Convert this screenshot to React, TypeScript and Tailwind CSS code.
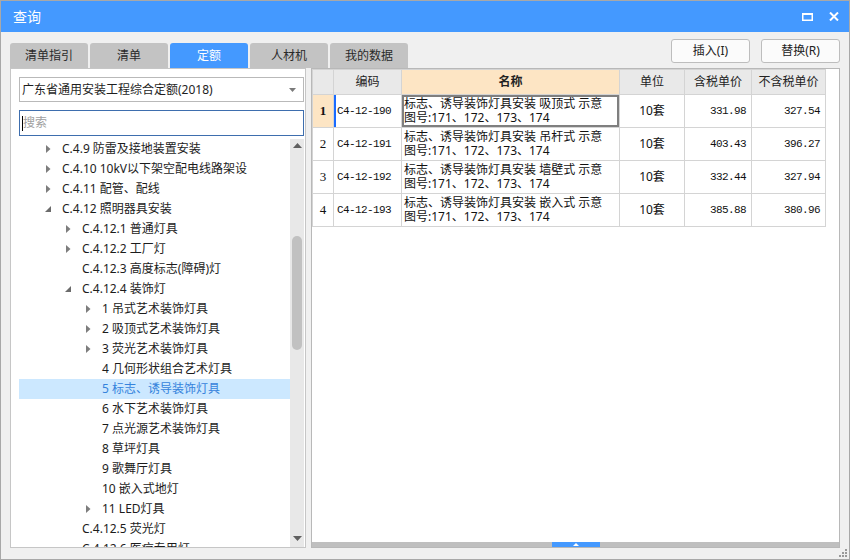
import React from 'react';

type Arrow = 'none' | 'closed' | 'open';

interface TreeItem {
  label: string;
  depth: 0 | 1 | 2;
  arrow: Arrow;
  selected?: boolean;
}

interface QuotaRow {
  no: number;
  code: string;
  name: string;
  unit: string;
  price: string;
  priceNoTax: string;
}

const tabs = ['清单指引', '清单', '定额', '人材机', '我的数据'];

const treeItems: TreeItem[] = [
  { label: 'C.4.9 防雷及接地装置安装', depth: 0, arrow: 'closed' },
  { label: 'C.4.10 10kV以下架空配电线路架设', depth: 0, arrow: 'closed' },
  { label: 'C.4.11 配管、配线', depth: 0, arrow: 'closed' },
  { label: 'C.4.12 照明器具安装', depth: 0, arrow: 'open' },
  { label: 'C.4.12.1 普通灯具', depth: 1, arrow: 'closed' },
  { label: 'C.4.12.2 工厂灯', depth: 1, arrow: 'closed' },
  { label: 'C.4.12.3 高度标志(障碍)灯', depth: 1, arrow: 'none' },
  { label: 'C.4.12.4 装饰灯', depth: 1, arrow: 'open' },
  { label: '1 吊式艺术装饰灯具', depth: 2, arrow: 'closed' },
  { label: '2 吸顶式艺术装饰灯具', depth: 2, arrow: 'closed' },
  { label: '3 荧光艺术装饰灯具', depth: 2, arrow: 'closed' },
  { label: '4 几何形状组合艺术灯具', depth: 2, arrow: 'none' },
  { label: '5 标志、诱导装饰灯具', depth: 2, arrow: 'none', selected: true },
  { label: '6 水下艺术装饰灯具', depth: 2, arrow: 'none' },
  { label: '7 点光源艺术装饰灯具', depth: 2, arrow: 'none' },
  { label: '8 草坪灯具', depth: 2, arrow: 'none' },
  { label: '9 歌舞厅灯具', depth: 2, arrow: 'none' },
  { label: '10 嵌入式地灯', depth: 2, arrow: 'none' },
  { label: '11 LED灯具', depth: 2, arrow: 'closed' },
  { label: 'C.4.12.5 荧光灯', depth: 1, arrow: 'none' },
  { label: 'C.4.12.6 医疗专用灯', depth: 1, arrow: 'none' },
];

const rows: QuotaRow[] = [
  { no: 1, code: 'C4-12-190', name: '吸顶式', unit: '10套', price: '331.98', priceNoTax: '327.54' },
  { no: 2, code: 'C4-12-191', name: '吊杆式', unit: '10套', price: '403.43', priceNoTax: '396.27' },
  { no: 3, code: 'C4-12-192', name: '墙壁式', unit: '10套', price: '332.44', priceNoTax: '327.94' },
  { no: 4, code: 'C4-12-193', name: '嵌入式', unit: '10套', price: '385.88', priceNoTax: '380.96' },
];

const depthPad = ['pl-[24px]', 'pl-[44px]', 'pl-[64px]'];

const TreeArrow: React.FC<{ arrow: Arrow }> = ({ arrow }) => {
  if (arrow === 'closed') {
    return (
      <svg width="5" height="8" viewBox="0 0 5 8">
        <path d="M0 0L4.5 4L0 8Z" fill="#7d7d7d" />
      </svg>
    );
  }
  if (arrow === 'open') {
    return (
      <svg width="6" height="6" viewBox="0 0 6 6">
        <path d="M6 0L6 6L0 6Z" fill="#6b6b6b" />
      </svg>
    );
  }
  return null;
};

const TitleBar: React.FC = () => (
  <div className="h-[31px] shrink-0 bg-[#4499ff] flex items-center pl-[12px] pr-[10px] text-white text-[14px]">
    <span>查询</span>
    <div className="ml-auto flex items-center gap-[16px]">
      <svg width="11" height="8" viewBox="0 0 11 8">
        <rect x="0.75" y="1" width="9.5" height="6.25" fill="none" stroke="#fff" strokeWidth="1.5" />
        <rect x="0" y="0" width="11" height="2" fill="#fff" />
      </svg>
      <svg width="10" height="9" viewBox="0 0 10 9">
        <path d="M1 0.5L9 8.5M9 0.5L1 8.5" stroke="#fff" strokeWidth="2" />
      </svg>
    </div>
  </div>
);

const TreeScrollbar: React.FC = () => (
  <div className="w-[14px] shrink-0 bg-[#e8e8e8] flex flex-col items-center">
    <div className="h-[9px] shrink-0 flex items-end">
      <svg width="9" height="5" viewBox="0 0 9 5">
        <path d="M0 5L4.5 0L9 5Z" fill="#606060" />
      </svg>
    </div>
    <div className="h-[88px] shrink-0" />
    <div className="w-[10px] h-[114px] shrink-0 rounded-[5px] bg-[#c1c1c1]" />
    <div className="flex-1" />
    <div className="h-[11px] shrink-0 flex items-start">
      <svg width="9" height="5" viewBox="0 0 9 5">
        <path d="M0 0L9 0L4.5 5Z" fill="#606060" />
      </svg>
    </div>
  </div>
);

const LeftPanel: React.FC = () => (
  <div className="w-[296px] shrink-0 bg-white border border-[#c6c6c6] pt-[8px] pl-[8px] pr-[1px] flex flex-col overflow-hidden">
    <div className="h-[25px] shrink-0 border border-[#b9b9b9] flex items-center pl-[2px] pr-[7px] text-[12px] text-[#1e1e1e]">
      <span>广东省通用安装工程综合定额(2018)</span>
      <svg className="ml-auto" width="7" height="4" viewBox="0 0 7 4">
        <path d="M0 0L7 0L3.5 4Z" fill="#7a7a7a" />
      </svg>
    </div>
    <div className="mt-[8px] h-[26px] shrink-0 border border-[#3e6eae] flex items-center pl-[2px] text-[12px] text-[#a0a0a0]">
      <span className="w-px h-[15px] bg-black" />
      <span>搜索</span>
    </div>
    <div className="mt-[3px] flex-1 flex min-h-0">
      <div className="flex-1 overflow-hidden">
        {treeItems.map((item) => (
          <div
            key={item.label}
            className={`h-[20px] flex items-center ${depthPad[item.depth]} ${item.selected ? 'bg-[#cce8ff] text-[#3583dc]' : 'text-[#1c1c1c]'}`}
          >
            <span className="w-[10px] h-[20px] flex items-center justify-center">
              <TreeArrow arrow={item.arrow} />
            </span>
            <span className="ml-[9px] text-[12px] whitespace-nowrap">{item.label}</span>
          </div>
        ))}
      </div>
      <TreeScrollbar />
    </div>
  </div>
);

const mono = "font-['Liberation_Mono','Noto_Sans_CJK_SC',monospace] text-[11px] tracking-[-0.6px]";
const cell = 'border border-[#d4d4d4]';

const QuotaTable: React.FC = () => (
  <table className="border-collapse table-fixed w-[513px] -ml-px -mt-px">
    <colgroup>
      <col className="w-[21px]" />
      <col className="w-[68px]" />
      <col className="w-[218px]" />
      <col className="w-[65px]" />
      <col className="w-[67px]" />
      <col className="w-[74px]" />
    </colgroup>
    <thead>
      <tr className="h-[25px] text-[12px] text-[#222]">
        <th className={`${cell} bg-[#e9e9e9]`} />
        <th className={`${cell} bg-[#e9e9e9] font-normal`}>编码</th>
        <th className={`${cell} bg-[#fde5c4] font-bold`}>名称</th>
        <th className={`${cell} bg-[#e9e9e9] font-normal`}>单位</th>
        <th className={`${cell} bg-[#e9e9e9] font-normal`}>含税单价</th>
        <th className={`${cell} bg-[#e9e9e9] font-normal`}>不含税单价</th>
      </tr>
    </thead>
    <tbody>
      {rows.map((row) => {
        const active = row.no === 1;
        return (
          <tr key={row.code} className="h-[33px] text-[#111]">
            <td
              className={`${cell} text-center font-['Liberation_Serif',serif] text-[13px] ${active ? 'bg-[#fde5c4] font-bold' : ''}`}
            >
              {row.no}
            </td>
            <td className={`${cell} ${mono} pl-[3px] ${active ? 'shadow-[inset_2px_0_0_#1a6bff]' : ''}`}>{row.code}</td>
            <td
              className={`${cell} px-[2px] text-[12px] leading-[14px] whitespace-nowrap ${active ? 'shadow-[inset_0_0_0_2px_#7f7f7f]' : ''}`}
            >
              <div>标志、诱导装饰灯具安装 {row.name} 示意</div>
              <div>图号:171、172、173、174</div>
            </td>
            <td className={`${cell} text-center text-[12px]`}>{row.unit}</td>
            <td className={`${cell} ${mono} text-right pr-[5px]`}>{row.price}</td>
            <td className={`${cell} ${mono} text-right pr-[5px]`}>{row.priceNoTax}</td>
          </tr>
        );
      })}
    </tbody>
  </table>
);

const RightPanel: React.FC = () => (
  <div className="flex-1 bg-white border border-[#b8b8b8] flex flex-col overflow-hidden">
    <div className="flex-1 min-h-0 pl-px pt-px">
      <QuotaTable />
    </div>
    <div className="h-[5px] shrink-0 bg-[#bfbfbf] flex justify-center">
      <div className="w-[48px] h-[5px] bg-[#4499ff] flex items-center justify-center">
        <svg width="6" height="3" viewBox="0 0 6 3">
          <path d="M0 3L3 0L6 3Z" fill="#fff" />
        </svg>
      </div>
    </div>
  </div>
);

const App: React.FC = () => {
  return (
    <div className="w-[850px] h-[560px] flex flex-col bg-[#f0f0f0] border border-[#a8a8a8] overflow-hidden font-['Noto_Sans','Noto_Sans_CJK_SC',sans-serif]">
      <TitleBar />
      <div className="flex-1 min-h-0 flex flex-col px-[9px] pt-[7px] pb-[11px] relative">
        <div className="h-[29px] shrink-0 flex">
          <div className="self-end flex gap-[2px]">
            {tabs.map((t) => (
              <div
                key={t}
                className={`w-[78px] h-[25px] rounded-t-[3px] flex items-center justify-center text-[12px] ${t === '定额' ? 'bg-[#4499ff] text-white' : 'bg-[#c3c3c3] text-[#2a2a2a]'}`}
              >
                {t}
              </div>
            ))}
          </div>
          <div className="ml-auto self-start flex gap-[11px]">
            <button className="w-[79px] h-[24px] bg-[#fbfbfb] border border-[#bdbdbd] rounded-[3px] text-[12px] text-[#222]">
              插入(I)
            </button>
            <button className="w-[79px] h-[24px] bg-[#fbfbfb] border border-[#bdbdbd] rounded-[3px] text-[12px] text-[#222]">
              替换(R)
            </button>
          </div>
        </div>
        <div className="flex-1 flex gap-[5px] min-h-0">
          <LeftPanel />
          <RightPanel />
        </div>
        <svg className="absolute right-[1px] bottom-[1px]" width="9" height="9" viewBox="0 0 9 9">
          <rect x="6" y="0" width="2" height="2" fill="#9a9a9a" />
          <rect x="3" y="3" width="2" height="2" fill="#9a9a9a" />
          <rect x="6" y="3" width="2" height="2" fill="#9a9a9a" />
          <rect x="0" y="6" width="2" height="2" fill="#9a9a9a" />
          <rect x="3" y="6" width="2" height="2" fill="#9a9a9a" />
          <rect x="6" y="6" width="2" height="2" fill="#9a9a9a" />
        </svg>
      </div>
    </div>
  );
};

export default App;
